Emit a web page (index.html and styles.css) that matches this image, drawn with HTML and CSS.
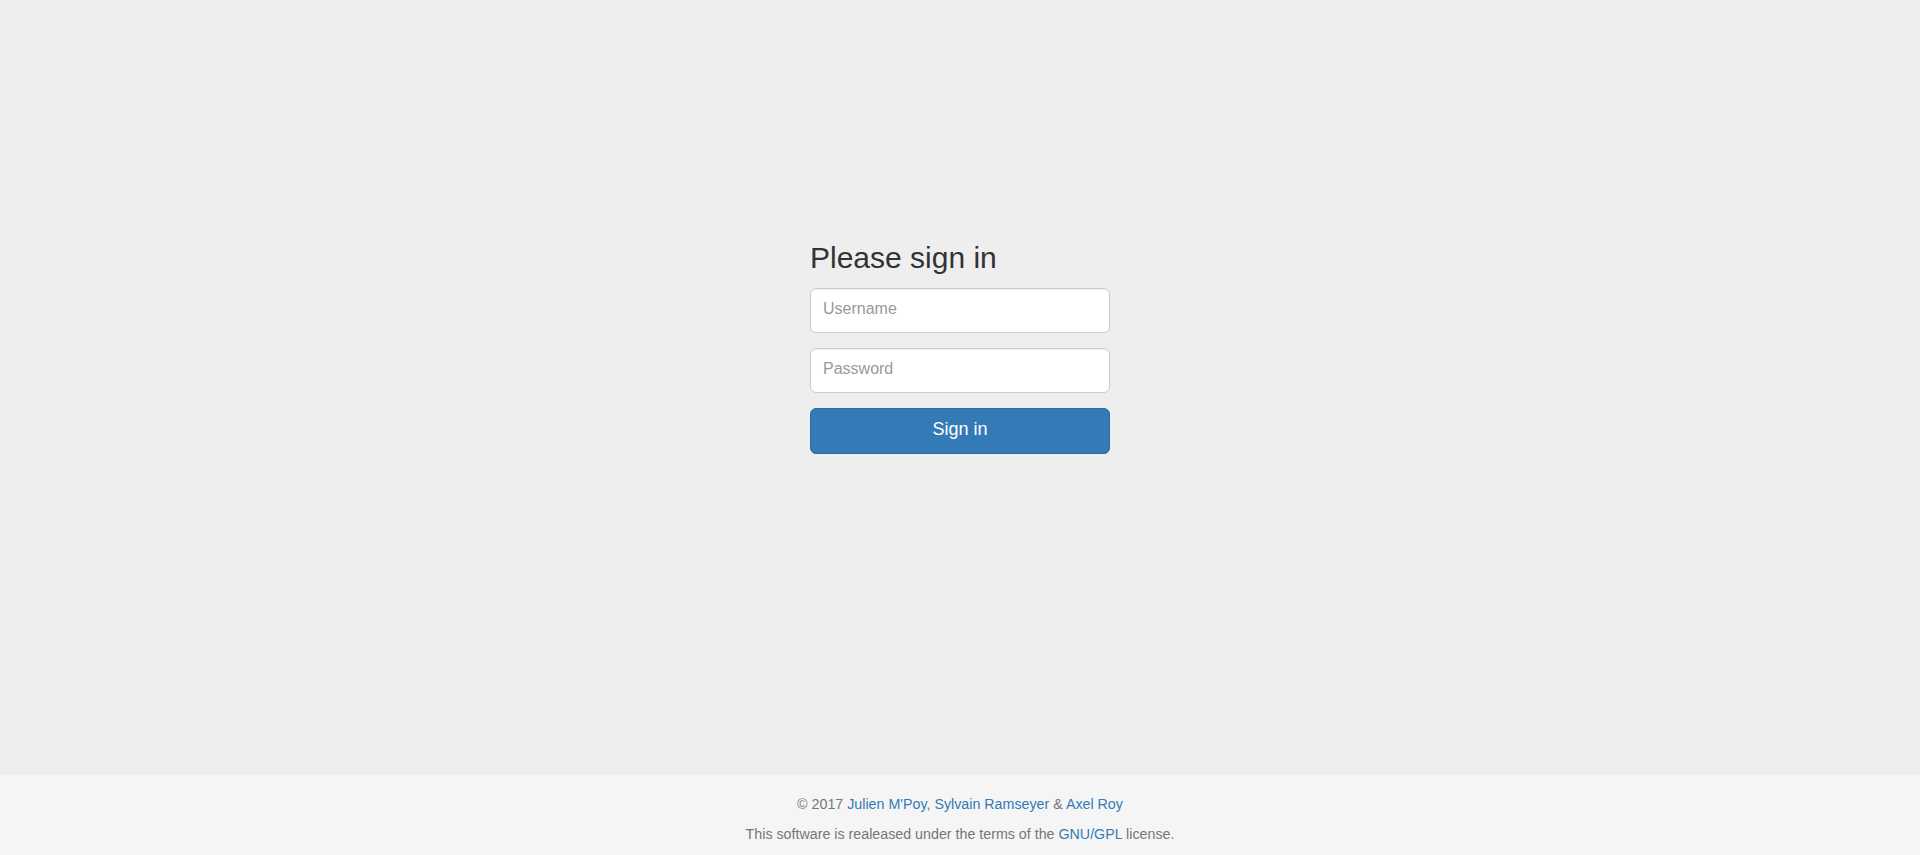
FILE: index.html
```html
<!DOCTYPE html>
<html lang="en">
<head>
<meta charset="utf-8">
<title>Please sign in</title>
<link rel="stylesheet" href="styles.css">
</head>
<body>
<main class="main">
  <form class="signin">
    <h2 class="signin-heading">Please sign in</h2>
    <input class="field" type="text" placeholder="Username">
    <input class="field" type="password" placeholder="Password">
    <button class="btn" type="button">Sign in</button>
  </form>
</main>
<footer class="footer">
  <p class="foot-line">© 2017 <a href="#">Julien M'Poy</a>, <a href="#">Sylvain Ramseyer</a> &amp; <a href="#">Axel Roy</a></p>
  <p class="foot-line">This software is realeased under the terms of the <a href="#">GNU/GPL</a> license.</p>
</footer>
</body>
</html>
```

FILE: styles.css
```css
* { box-sizing: border-box; }
html, body { margin: 0; height: 100%; }
body {
  display: flex;
  flex-direction: column;
  min-height: 100vh;
  background: #eeeeee;
  font-family: "Liberation Sans", Arial, sans-serif;
  font-size: 14px;
  line-height: 20px;
  color: #333333;
}
.main {
  flex: 1;
  display: flex;
  justify-content: center;
  padding-top: 241px;
}
.signin {
  width: 300px;
  display: flex;
  flex-direction: column;
}
.signin-heading {
  margin: 0 0 14px;
  font-size: 30px;
  line-height: 33px;
  font-weight: 500;
  color: #333333;
}
.field {
  height: 45px;
  margin: 0 0 15px;
  padding: 0 12px 3px;
  border: 1px solid #cccccc;
  border-radius: 6px;
  background: #ffffff;
  font-family: inherit;
  font-size: 16px;
  color: #555555;
  box-shadow: inset 0 1px 1px rgba(0,0,0,0.075);
  outline: none;
}
.field::placeholder { color: #999999; }
.btn {
  height: 46px;
  display: flex;
  align-items: center;
  justify-content: center;
  padding: 0 0 3px;
  border: 1px solid #2e6da4;
  border-radius: 6px;
  background: #337ab7;
  color: #ffffff;
  font-family: inherit;
  font-size: 18px;
  cursor: pointer;
}
.footer {
  height: 80px;
  flex: none;
  padding-top: 19px;
  background: #f5f5f5;
  text-align: center;
  color: #777777;
  font-size: 14.25px;
}
.foot-line { margin: 0 0 10px; }
.footer a { color: #337ab7; text-decoration: none; }
```
